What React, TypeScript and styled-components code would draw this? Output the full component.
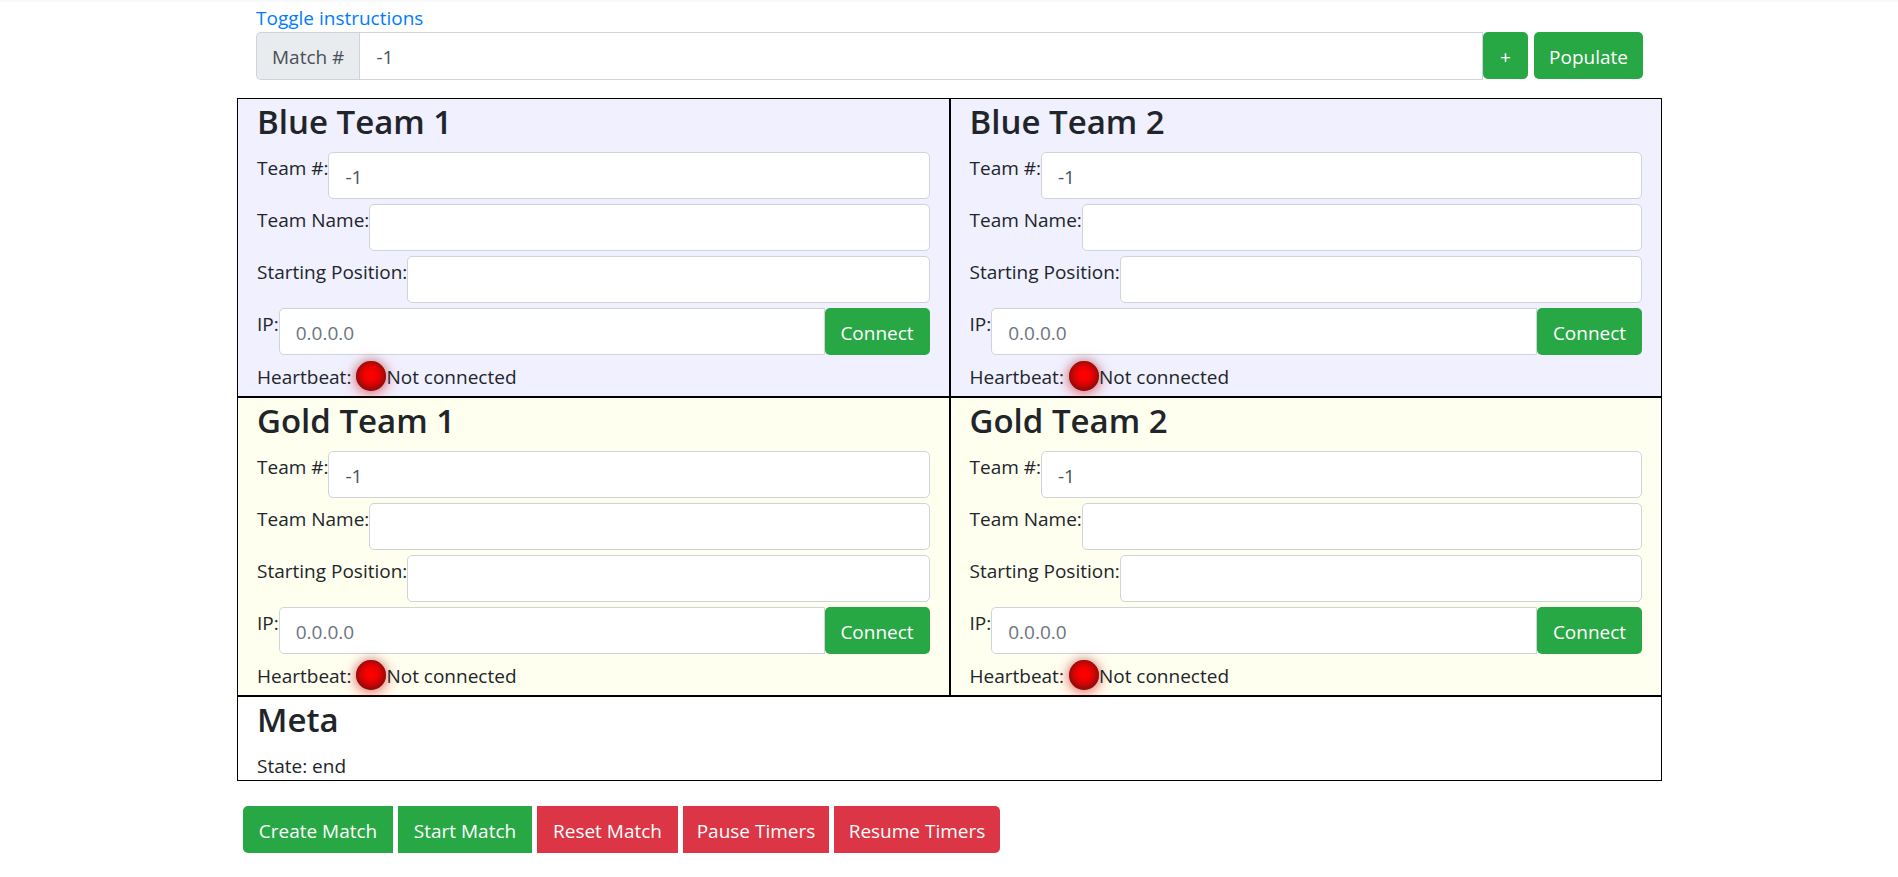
import React, { useId, useState } from "react";
import styled, { createGlobalStyle, css } from "styled-components";

const GlobalStyle = createGlobalStyle`
  *, *::before, *::after { box-sizing: border-box; }
  body {
    margin: 0;
    background: #fff;
    color: #212529;
    font: 400 19px/32px "Open Sans", "Noto Sans", sans-serif;
  }
`;

const TopStrip = styled.div`
  height: 2px;
  background: #f8f9fa;
`;

const Page = styled.div`
  padding-left: 1px;
`;

const Container = styled.main`
  max-width: 1425px;
  margin: 0 auto;
`;

const Header = styled.header`
  padding: 0 19px;
`;

const ToggleLink = styled.a`
  display: block;
  width: fit-content;
  height: 30px;
  color: #007bff;
  text-decoration: none;
  &:hover { text-decoration: underline; }
`;

const MatchRow = styled.div`
  display: flex;
  align-items: flex-start;
`;

const MatchLabel = styled.label`
  height: 48px;
  padding: 8px 15px;
  border: 1px solid #ced4da;
  border-right: 0;
  border-radius: 5px 0 0 5px;
  background: #e9ecef;
  color: #495057;
  white-space: nowrap;
`;

const Input = styled.input<{ $joinLeft?: boolean; $joinRight?: boolean }>`
  flex: 1;
  min-width: 0;
  height: 47px;
  padding: 2px 16px 0;
  border: 1px solid #ced4da;
  border-radius: 5px;
  background: #fff;
  color: #495057;
  font: inherit;
  ${(p) => p.$joinLeft && css`
    height: 48px;
    border-top-left-radius: 0;
    border-bottom-left-radius: 0;
  `}
  ${(p) => p.$joinRight && css`
    border-top-right-radius: 0;
    border-bottom-right-radius: 0;
  `}
  &::placeholder { color: #6c757d; opacity: 1; }
`;

const Button = styled.button<{ $width: number; $danger?: boolean }>`
  width: ${(p) => p.$width}px;
  height: 47px;
  padding: 2px 0 0;
  border: 0;
  border-radius: 5px;
  background: ${(p) => (p.$danger ? "#dc3545" : "#28a745")};
  color: #fff;
  font: inherit;
  white-space: nowrap;
  cursor: pointer;
`;

const PopulateButton = styled(Button)`
  margin-left: 6px;
`;

const Board = styled.div`
  display: grid;
  grid-template-columns: 1fr 1fr;
  margin-top: 18px;
`;

const Cell = styled.section<{ $bg?: string; $wide?: boolean }>`
  grid-column: ${(p) => (p.$wide ? "1 / -1" : "auto")};
  padding: 0 19px;
  border: 1px solid #000;
  background: ${(p) => p.$bg ?? "#fff"};
`;

const Title = styled.h3`
  margin: 0 0 8px;
  font-size: 33px;
  font-weight: 600;
  line-height: 45px;
`;

const Field = styled.div`
  display: flex;
  align-items: flex-start;
  margin-bottom: 5px;
`;

const Label = styled.label`
  white-space: nowrap;
`;

const Heartbeat = styled.div`
  display: flex;
  height: 36px;
  padding-top: 1px;
`;

const Led = styled.span`
  width: 30px;
  height: 30px;
  margin-left: 5px;
  border-radius: 50%;
  background: #f00;
  box-shadow:
    rgba(0, 0, 0, 0.2) 0 -1px 9px 1px,
    inset #441313 0 -1px 11px,
    rgba(255, 0, 0, 0.5) 0 3px 15px;
`;

const State = styled.div`
  height: 30px;
`;

const Actions = styled.div`
  display: flex;
  gap: 5px;
  margin-top: 25px;
  padding: 0 6px;
  ${Button} { border-radius: 0; }
  ${Button}:first-child { border-radius: 5px 0 0 5px; }
  ${Button}:last-child { border-radius: 0 5px 5px 0; }
`;

function Team({ name, bg }: { name: string; bg: string }) {
  const id = useId();
  return (
    <Cell $bg={bg}>
      <Title>{name}</Title>
      <Field>
        <Label htmlFor={id + "num"}>Team #:</Label>
        <Input id={id + "num"} type="number" defaultValue={-1} />
      </Field>
      <Field>
        <Label htmlFor={id + "name"}>Team Name:</Label>
        <Input id={id + "name"} type="text" />
      </Field>
      <Field>
        <Label htmlFor={id + "pos"}>Starting Position:</Label>
        <Input id={id + "pos"} type="text" />
      </Field>
      <Field>
        <Label htmlFor={id + "ip"}>IP:</Label>
        <Input id={id + "ip"} type="text" placeholder="0.0.0.0" $joinRight />
        <Button type="button" $width={105}>Connect</Button>
      </Field>
      <Heartbeat>
        <span>Heartbeat:</span>
        <Led />
        <span>Not connected</span>
      </Heartbeat>
    </Cell>
  );
}

export default function App() {
  const [match, setMatch] = useState(-1);
  return (
    <>
      <GlobalStyle />
      <TopStrip />
      <Page>
        <Container>
          <Header>
            <ToggleLink href="#instructions">Toggle instructions</ToggleLink>
            <MatchRow>
              <MatchLabel htmlFor="match">Match #</MatchLabel>
              <Input
                id="match"
                type="number"
                value={match}
                onChange={(e) => setMatch(Number(e.target.value))}
                $joinLeft
                $joinRight
              />
              <Button type="button" $width={45} onClick={() => setMatch(match + 1)}>+</Button>
              <PopulateButton type="button" $width={109}>Populate</PopulateButton>
            </MatchRow>
          </Header>
          <Board>
            <Team name="Blue Team 1" bg="#f0f0ff" />
            <Team name="Blue Team 2" bg="#f0f0ff" />
            <Team name="Gold Team 1" bg="#fffff0" />
            <Team name="Gold Team 2" bg="#fffff0" />
            <Cell $wide>
              <Title>Meta</Title>
              <State>State: end</State>
            </Cell>
          </Board>
          <Actions>
            <Button type="button" $width={150}>Create Match</Button>
            <Button type="button" $width={134}>Start Match</Button>
            <Button type="button" $width={141} $danger>Reset Match</Button>
            <Button type="button" $width={146} $danger>Pause Timers</Button>
            <Button type="button" $width={166} $danger>Resume Timers</Button>
          </Actions>
        </Container>
      </Page>
    </>
  );
}
